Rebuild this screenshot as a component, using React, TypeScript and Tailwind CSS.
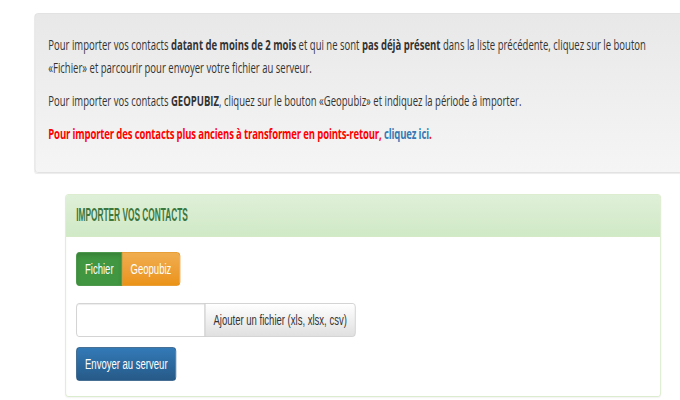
// Page rendered at 1000px and squeezed horizontally, as the capture was.
export default function App() {
  return (
    <div className="w-[680px] h-[400px] overflow-hidden bg-white">
      <div className="w-[1000px] origin-top-left scale-x-[0.68] pt-[13px]">
        <InfoWell />
        <ImportPanel />
      </div>
    </div>
  );
}

function InfoWell() {
  return (
    <div className="ml-[51px] w-[960px] rounded-[4px] border border-[#dcdcdc] bg-linear-to-b from-[#e8e8e8] to-[#f5f5f5] px-[19px] pt-[19px] pb-[27px] shadow-[0_1px_1px_rgba(0,0,0,0.08)] font-['Open_Sans',sans-serif] text-[14px] leading-[23px] text-[#333]">
      <p className="mb-[10px] w-[915px]">
        Pour importer vos contacts <b>datant de moins de 2 mois</b> et qui ne
        sont <b>pas déjà présent</b> dans la liste précédente, cliquez sur le
        bouton «Fichier» et parcourir pour envoyer votre fichier au serveur.
      </p>
      <p className="mb-[10px]">
        Pour importer vos contacts <b>GEOPUBIZ</b>, cliquez sur le bouton
        «Geopubiz» et indiquez la période à importer.
      </p>
      <p className="font-bold tracking-[-0.2px] text-[#ff0000]">
        Pour importer des contacts plus anciens à transformer en points-retour,{" "}
        <a className="text-[#337ab7]">cliquez ici</a>.
      </p>
    </div>
  );
}

function ImportPanel() {
  return (
    <div className="mt-[21px] ml-[96px] w-[876px] rounded-[4px] border border-[#d6e9c6] bg-white shadow-[0_1px_2px_rgba(0,0,0,0.05)] font-['Liberation_Sans',Arial,sans-serif] text-[14px]">
      <div className="rounded-t-[3px] border-b border-[#d6e9c6] bg-linear-to-b from-[#dff0d8] to-[#d0e9c6] px-[15px] py-[10px] leading-[20px]">
        <span className="inline-block origin-left scale-x-[0.68] text-[18px] font-bold text-[#3c763d]">
          IMPORTER VOS CONTACTS
        </span>
      </div>
      <div className="p-[15px]">
        <div className="flex">
          <button className="rounded-l-[4px] border border-[#3e8f3e] bg-[#419641] px-[12px] py-[6px] leading-[20px] text-white shadow-[inset_0_3px_5px_rgba(0,0,0,0.125)]">
            Fichier
          </button>
          <button className="-ml-px rounded-r-[4px] border border-[#e38d13] bg-linear-to-b from-[#f0ad4e] to-[#eb9316] px-[12px] py-[6px] leading-[20px] text-white">
            Geopubiz
          </button>
        </div>
        <div className="mt-[17px] flex">
          <div className="h-[34px] w-[190px] rounded-l-[4px] border border-[#ccc] bg-white shadow-[inset_0_1px_1px_rgba(0,0,0,0.075)]" />
          <button className="-ml-px h-[34px] rounded-r-[4px] border border-[#ccc] bg-linear-to-b from-white to-[#e0e0e0] px-[12px] leading-[20px] text-[#333]">
            Ajouter un fichier (xls, xlsx, csv)
          </button>
        </div>
        <button className="mt-[10px] rounded-[4px] border border-[#245580] bg-linear-to-b from-[#337ab7] to-[#265a88] px-[12px] py-[6px] leading-[20px] text-white">
          Envoyer au serveur
        </button>
      </div>
    </div>
  );
}
